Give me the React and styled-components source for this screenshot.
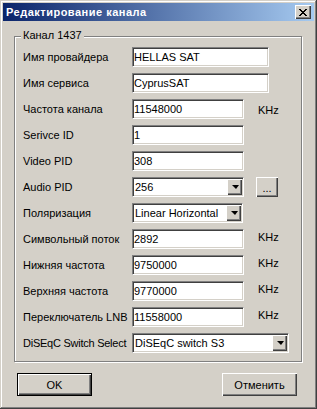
import React from 'react'
import styled, { createGlobalStyle } from 'styled-components'

const GlobalStyle = createGlobalStyle`
  html, body {
    margin: 0;
    padding: 0;
    background: #D4D0C8;
  }
  body {
    font-family: "Liberation Sans", Arial, sans-serif;
    font-size: 11px;
    color: #000;
  }
`

const raised = `
  background: #D4D0C8;
  box-shadow: inset 1px 1px #fff, inset -1px -1px #404040, inset -2px -2px #808080;
`

const Window = styled.div`
  box-sizing: border-box;
  width: 317px;
  height: 409px;
  padding: 3px;
  background: #D4D0C8;
  box-shadow: inset -1px -1px #404040, inset 1px 1px #D4D0C8, inset -2px -2px #808080, inset 2px 2px #fff;
  display: flex;
  flex-direction: column;
`

const TitleBar = styled.div`
  height: 18px;
  flex: 0 0 18px;
  display: flex;
  align-items: center;
  justify-content: space-between;
  padding: 0 3px 0 3px;
  background: linear-gradient(to right, #0A246A, #A6CAF0);
`

const TitleText = styled.div`
  color: #fff;
  font-weight: bold;
  font-size: 11px;
  letter-spacing: 0.5px;
`

const CloseButton = styled.div`
  width: 16px;
  height: 14px;
  display: flex;
  align-items: center;
  justify-content: center;
  ${raised}
`

const GroupBox = styled.div`
  position: relative;
  box-sizing: border-box;
  width: 288px;
  margin: 15px 0 0 11px;
  border: 1px solid #808080;
  box-shadow: inset 1px 1px #fff, 1px 1px #fff;
  padding: 10px 0 8px 8px;
  display: flex;
  flex-direction: column;
  gap: 6px;
`

const Caption = styled.div`
  position: absolute;
  top: -8px;
  left: 6px;
  padding: 0 2px;
  line-height: 13px;
  background: #D4D0C8;
`

const Row = styled.div`
  display: flex;
  align-items: center;
  height: 20px;
`

const Label = styled.div`
  flex: 0 0 109px;
  white-space: nowrap;
  letter-spacing: ${p => (p.$tight ? -0.25 : 0)}px;
`

const sunken = `
  box-sizing: border-box;
  height: 20px;
  background: #fff;
  border-style: solid;
  border-width: 1px;
  border-color: #808080 #fff #fff #808080;
  box-shadow: inset 1px 1px #404040, inset -1px -1px #D4D0C8;
`

const TextBox = styled.input`
  ${sunken}
  width: ${p => p.$width}px;
  margin: 0;
  padding: 0 1px;
  font-family: "Liberation Sans", Arial, sans-serif;
  font-size: 11px;
  color: #000;
  outline: none;
`

const Combo = styled.div`
  ${sunken}
  width: ${p => p.$width}px;
  display: flex;
  align-items: center;
  padding: 1px 1px 1px 2px;
`

const ComboValue = styled.div`
  flex: 1 1 auto;
  white-space: nowrap;
  overflow: hidden;
`

const DropButton = styled.div`
  flex: 0 0 15px;
  height: 16px;
  display: flex;
  align-items: center;
  justify-content: center;
  ${raised}
`

const Arrow = styled.div`
  width: 0;
  height: 0;
  border-left: 4px solid transparent;
  border-right: 3px solid transparent;
  border-top: 4px solid #000;
  margin-left: 1px;
`

const Unit = styled.div`
  margin-left: 14px;
  margin-top: ${p => (p.$raise ? -5 : 1)}px;
`

const MoreButton = styled.div`
  box-sizing: border-box;
  width: 22px;
  height: 20px;
  margin-left: 12px;
  display: flex;
  align-items: flex-end;
  justify-content: center;
  padding-bottom: 3px;
  line-height: 11px;
  ${raised}
`

const ButtonBar = styled.div`
  display: flex;
  justify-content: space-between;
  margin-top: 11px;
  padding: 0 17px 0 14px;
`

const Button = styled.div`
  box-sizing: border-box;
  width: 75px;
  height: 23px;
  display: flex;
  align-items: center;
  justify-content: center;
  ${raised}
  ${p => p.$default && `
    border: 1px solid #000;
  `}
`

const rows = [
  { label: 'Имя провайдера', value: 'HELLAS SAT', width: 137 },
  { label: 'Имя сервиса', value: 'CyprusSAT', width: 137 },
  { label: 'Частота канала', value: '11548000', width: 112, unit: true },
  { label: 'Serivce ID', value: '1', width: 112 },
  { label: 'Video PID', value: '308', width: 112 },
  { label: 'Audio PID', value: '256', width: 112, combo: true, more: true },
  { label: 'Поляризация', value: 'Linear Horizontal', width: 111, combo: true },
  { label: 'Символьный поток', value: '2892', width: 112, unit: true, raise: true },
  { label: 'Нижняя частота', value: '9750000', width: 112, unit: true, raise: true },
  { label: 'Верхняя частота', value: '9770000', width: 112, unit: true, raise: true },
  { label: 'Переключатель LNB', value: '11558000', width: 112, unit: true, raise: true },
  { label: 'DiSEqC Switch Select', value: 'DiSEqC switch S3', width: 157, combo: true, tight: true },
]

const CloseIcon = () => (
  <svg width="8" height="7" viewBox="0 0 8 7" shapeRendering="crispEdges">
    <path
      fill="#000"
      d="M0 0h2v1H0z M6 0h2v1H6z M1 1h2v1H1z M5 1h2v1H5z M2 2h4v1H2z M3 3h2v1H3z M2 4h4v1H2z M1 5h2v1H1z M5 5h2v1H5z M0 6h2v1H0z M6 6h2v1H6z"
    />
  </svg>
)

export default function App() {
  return (
    <>
      <GlobalStyle />
      <Window>
        <TitleBar>
          <TitleText>Редактирование канала</TitleText>
          <CloseButton>
            <CloseIcon />
          </CloseButton>
        </TitleBar>

        <GroupBox>
          <Caption>Канал 1437</Caption>
          {rows.map(r => (
            <Row key={r.label}>
              <Label $tight={r.tight}>{r.label}</Label>
              {r.combo ? (
                <Combo $width={r.width}>
                  <ComboValue>{r.value}</ComboValue>
                  <DropButton>
                    <Arrow />
                  </DropButton>
                </Combo>
              ) : (
                <TextBox $width={r.width} value={r.value} readOnly />
              )}
              {r.unit && <Unit $raise={r.raise}>KHz</Unit>}
              {r.more && <MoreButton>...</MoreButton>}
            </Row>
          ))}
        </GroupBox>

        <ButtonBar>
          <Button $default>OK</Button>
          <Button>Отменить</Button>
        </ButtonBar>
      </Window>
    </>
  )
}
